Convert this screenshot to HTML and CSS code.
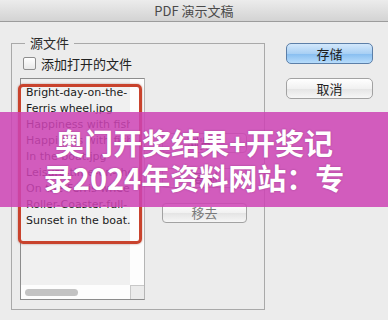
FILE: index.html
```html
<!DOCTYPE html>
<html lang="zh-CN">
<head>
  <meta charset="UTF-8">
  <title>PDF 演示文稿</title>
  <link rel="stylesheet" href="styles.css">
</head>
<body>
  <div class="window">
    <div class="titlebar">PDF 演示文稿</div>

    <div class="dialog">
      <fieldset class="source">
        <legend>源文件</legend>
        <div class="source-body">
          <div class="source-left">
            <label class="check-row">
              <span class="checkbox"></span>
              添加打开的文件
            </label>
            <div class="listbox">
              <div class="list-lines">
                <div>Bright-day-on-the-</div>
                <div>Ferris wheel.jpg</div>
                <div>Happiness with fish</div>
                <div>Happiness with fish</div>
                <div>In the boat.jpg</div>
                <div>Leisure-time-on-the</div>
                <div>On the Ferris wheel</div>
                <div>Roller-Coaster-full-</div>
                <div>Sunset in the boat.jpg</div>
              </div>
              <div class="vtrack"></div>
              <div class="hbar">
                <div class="htrack"><span class="hthumb"></span></div>
                <div class="corner"></div>
              </div>
            </div>
          </div>
          <div class="source-buttons">
            <button type="button" class="btn">浏览...</button>
            <button type="button" class="btn">复制</button>
            <button type="button" class="btn off">移去</button>
          </div>
        </div>
        <!-- 红框标注 -->
        <div class="mark"></div>
      </fieldset>

      <div class="actions">
        <button type="button" class="btn big primary">存储</button>
        <button type="button" class="btn big">取消</button>
      </div>
    </div>

    <div class="banner">奥门开奖结果+开奖记<br>录2024年资料网站：专</div>
  </div>
</body>
</html>
```

FILE: styles.css
```css
body {
  margin: 0;
  background: #ececec;
  font-family: "Noto Sans CJK SC", "DejaVu Sans", sans-serif;
  color: #1e1e1e;
}
.window {
  position: relative;
  width: 388px;
  height: 320px;
  overflow: hidden;
  background: #ececec;
}
.titlebar {
  height: 21px;
  line-height: 22px;
  text-align: center;
  font-size: 13px;
  color: #4a4a4a;
  background: linear-gradient(#ececec, #d3d3d3);
  border-bottom: 1px solid #9c9c9c;
}
.dialog {
  display: flex;
  align-items: flex-start;
}
.source {
  position: relative;
  margin: 13px 0 0 11px;
  padding: 0 15px 9px 8px;
  width: 229px;
  border: 1px solid #a9a9a9;
  border-radius: 0;
}
.source legend {
  margin-left: 5px;
  padding: 0 5px;
  font-size: 13px;
  line-height: 16px;
  color: #2a2a2a;
}
.source-body {
  display: flex;
  gap: 17px;
}
.source-left {
  width: 125px;
}
.check-row {
  display: flex;
  align-items: center;
  gap: 5px;
  height: 16px;
  margin: 4px 0 0 3px;
  font-size: 13px;
  color: #222;
  white-space: nowrap;
}
.checkbox {
  width: 11px;
  height: 11px;
  border: 1px solid #8e8e8e;
  border-radius: 2px;
  background: linear-gradient(#ffffff, #e9e9e9);
}
.listbox {
  position: relative;
  margin-top: 7px;
  height: 220px;
  border: 1px solid #8c8c8c;
  border-right-color: #b5b5b5;
  background: #f0f0f0;
  overflow: hidden;
}
.list-lines {
  padding: 6px 0 0 5px;
  width: 104px;
  overflow: hidden;
  font-family: "DejaVu Sans", sans-serif;
  font-size: 11px;
  line-height: 16px;
  color: #1a1a1a;
  white-space: nowrap;
}
.vtrack {
  position: absolute;
  top: 0;
  right: 0;
  width: 14px;
  bottom: 14px;
  background: #fdfdfd;
}
.hbar {
  position: absolute;
  left: 0;
  right: 0;
  bottom: 0;
  height: 14px;
  display: flex;
}
.htrack {
  flex: 1;
  background: #fdfdfd;
  display: flex;
  align-items: center;
  padding-left: 4px;
}
.hthumb {
  width: 53px;
  height: 7px;
  border-radius: 4px;
  background: #c3c3c3;
}
.corner {
  width: 13px;
  background: #ebebeb;
  border-left: 1px solid #c8c8c8;
  border-top: 1px solid #c8c8c8;
}
.source-buttons {
  display: flex;
  flex-direction: column;
  gap: 15px;
  padding-top: 82px;
}
.btn {
  display: block;
  width: 85px;
  height: 20px;
  padding: 0;
  border: 1px solid #a2a2a2;
  border-radius: 4px;
  background: linear-gradient(#ffffff, #f1f1f1 50%, #e4e4e4 51%, #f6f6f6);
  font-family: "Noto Sans CJK SC", sans-serif;
  font-size: 13px;
  line-height: 18px;
  color: #1e1e1e;
}
.btn.off {
  color: #7a7a7a;
}
.actions {
  display: flex;
  flex-direction: column;
  gap: 14px;
  margin: 21px 0 0 21px;
}
.btn.big {
  width: 87px;
  height: 21px;
  border-radius: 5px;
}
.btn.primary {
  border-color: #5c7fa8;
  background: linear-gradient(#d3e8fb, #a9d0f4 50%, #86bdf0 51%, #b7dcfb);
}
.mark {
  position: absolute;
  left: 6px;
  top: 33px;
  width: 118px;
  height: 154px;
  border: 3px solid #c9432d;
  border-radius: 5px;
  box-shadow: 0 0 2px rgba(120, 30, 10, 0.5);
}
.banner {
  position: absolute;
  left: 0;
  right: 0;
  top: 112px;
  height: 70px;
  padding: 13px 0 12px;
  background: rgba(205, 68, 181, 0.86);
  color: #ffffff;
  text-align: center;
  font-family: "Noto Sans CJK SC", sans-serif;
  font-weight: 700;
  font-size: 29px;
  line-height: 35px;
  text-shadow: 0 0 2px rgba(90, 20, 80, 0.4);
}
```
